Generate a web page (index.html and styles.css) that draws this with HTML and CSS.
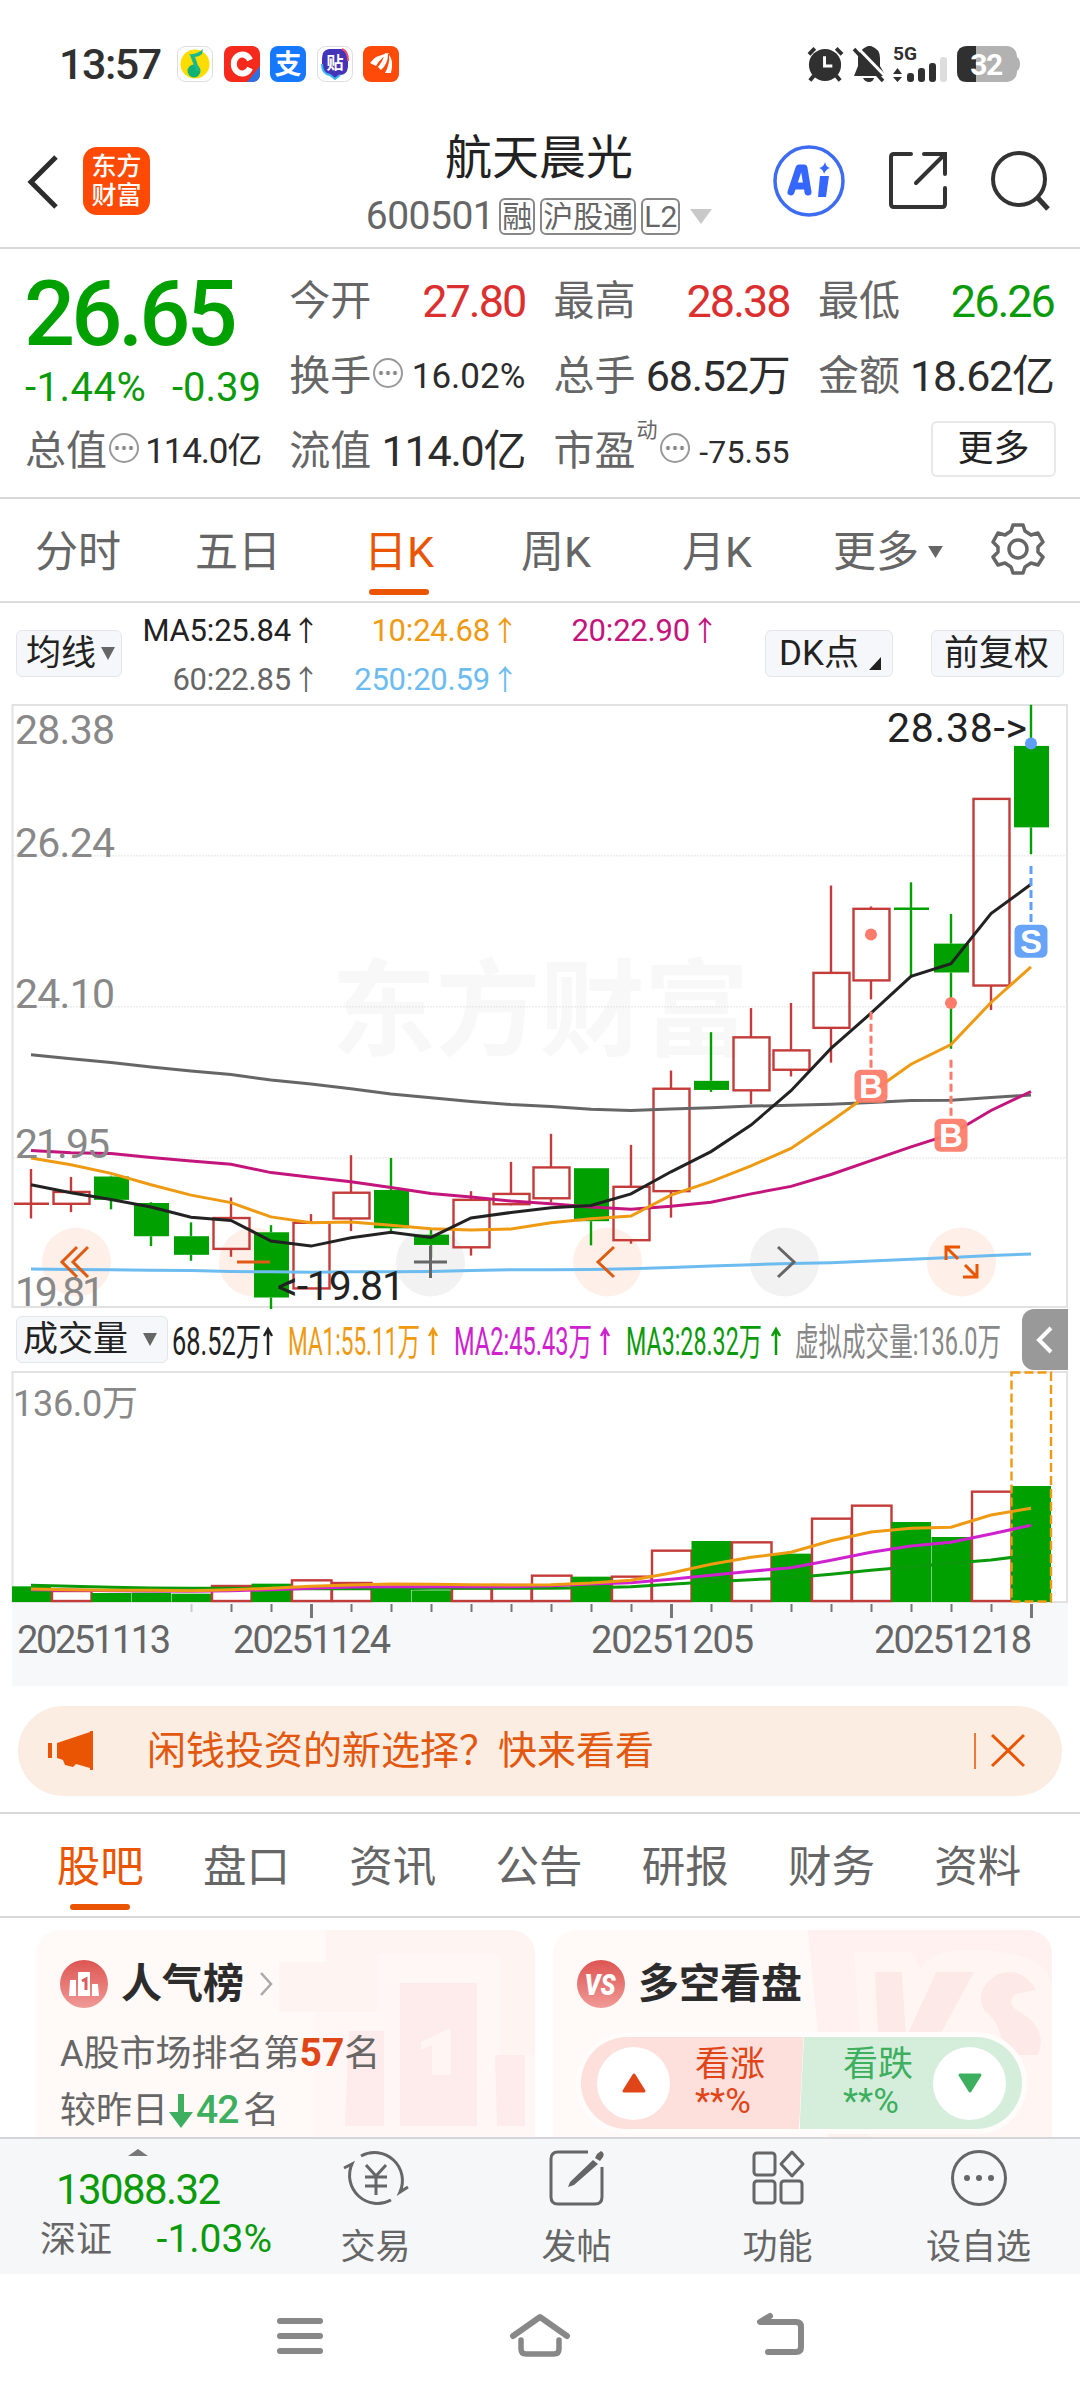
FILE: index.html
```html
<!DOCTYPE html>
<html lang="zh-CN">
<head>
    <meta charset="UTF-8">
    <meta name="viewport" content="width=device-width, initial-scale=1.0">
    <title>航天晨光 600501</title>
    <link rel="stylesheet" href="styles.css">
</head>
<body>
    <div class="status-bar">
        <span class="time">13:57</span>
        <div class="apps">
            <svg class="app" viewBox="0 0 36 36"><rect x=".5" y=".5" width="35" height="35" rx="8" fill="#fff" stroke="#ddd"/><circle cx="18" cy="18" r="14.5" fill="#fddc00"/><circle cx="17" cy="25" r="6.500" fill="#0fb174"/><path d="M12 8 Q20 9 26 3 L25 8 Q22 11 18 11 L23 25 H19 L13 9 Z" fill="#19b98c"/></svg>
            <svg class="app" viewBox="0 0 36 36"><rect width="36" height="36" rx="8" fill="#f52a1c"/><path d="M36 20 V28 Q36 36 28 36 H23 Z" fill="#2f6fe0"/><path d="M26 14 A8.500 9.500 0 1 0 26 22" fill="none" stroke="#fff" stroke-width="6"/></svg>
            <svg class="app" viewBox="0 0 36 36"><rect width="36" height="36" rx="8" fill="#1677ff"/><text x="18" y="28" class="app-text" font-size="27">支</text></svg>
            <svg class="app" viewBox="0 0 36 36"><rect x=".5" y=".5" width="35" height="35" rx="8" fill="#fff" stroke="#ddd"/><path d="M12 3 H25 Q31 4 31 12 V21 Q30 29 23 29 L18 33 L13 29 Q6 28 5 20 V12 Q5 4 12 3 Z" fill="#4634b8"/><path d="M5 18 Q5 28 13 29 L18 33 L23 29" fill="none" stroke="#36b6f5" stroke-width="2"/><path d="M25 3 Q31 5 31 15" fill="none" stroke="#ef4a6c" stroke-width="2"/><text x="18" y="23" class="app-text" font-size="17">贴</text></svg>
            <svg class="app" viewBox="0 0 36 36"><rect width="36" height="36" rx="8" fill="#ff4a0a"/><path d="M7 17 Q12 9 27 7 Q18 11 13 20 Z M15 21 Q20 15 22 7 L25 8 Q25 18 18 24 Z M22 27 Q27 18 26 9 Q31 14 28 27 Z" fill="#fff"/></svg>
        </div>
        <div class="sys">
            <svg width="37" height="36" viewBox="0 0 38 36"><circle cx="18.500" cy="19" r="16.500" fill="#303030"/><path d="M2 8 L8 2 M36 8 L30 2 M7 30 L3 35 M30 30 L34 35" stroke="#303030" stroke-width="4" fill="none"/><path d="M18 10 V20 H26" stroke="#fff" stroke-width="3" fill="none"/></svg>
            <svg width="31" height="36" viewBox="0 0 31 36"><path d="M15 0 H18 Q27 3 27 12 V20 L31 27 V30 H1 L5 20 V12 Q5 4 15 0 Z M10 32 H21 Q20 36 16 36 Q12 36 10 32 Z" fill="#303030"/><path d="M4 1 L33 31" stroke="#fff" stroke-width="3"/><path d="M1 3 L30 35" stroke="#303030" stroke-width="3.500"/></svg>
            <svg width="55" height="36" viewBox="0 0 55 36"><text x="0" y="14" class="net" textLength="24" lengthAdjust="spacingAndGlyphs">5G</text><path d="M0 28 L4.500 22 L9 28 Z M0 31 L4.500 36 L9 31 Z" fill="#303030"/><rect x="14" y="27" width="7" height="9" rx="3" fill="#303030"/><rect x="25" y="22" width="7" height="14" rx="3" fill="#303030"/><rect x="36" y="17" width="7" height="19" rx="3" fill="#303030"/><rect x="47" y="11" width="7" height="25" rx="3" fill="#ddd"/></svg>
            <svg width="63" height="36" viewBox="0 0 63 36"><rect width="60" height="36" rx="10" fill="#b2b2b2"/><path d="M10 0 H19 V36 H10 Q0 36 0 26 V10 Q0 0 10 0 Z" fill="#303030"/><path d="M60 11 Q63 13 63 18 Q63 23 60 25 Z" fill="#b2b2b2"/><text x="29" y="28.500" class="bat">32</text></svg>
        </div>
    </div>

    <header class="header">
        <svg class="back" width="32" height="54" viewBox="0 0 32 54"><path d="M29 2 L4 27 L29 52" fill="none" stroke="#2c2c2c" stroke-width="5"/></svg>
        <div class="logo"><span>东方</span><span>财富</span></div>
        <div class="stock">
            <h1>航天晨光</h1>
            <div class="code">600501<span class="tag">融</span><span class="tag">沪股通</span><span class="tag">L2</span><svg width="22" height="15" viewBox="0 0 22 15"><path d="M0 0 H22 L11 15 Z" fill="#c9c9c9"/></svg></div>
        </div>
        <div class="head-icons">
            <svg width="72" height="72" viewBox="0 0 72 72"><circle cx="36" cy="36" r="34" fill="none" stroke="#3d6cf3" stroke-width="3.500"/><path d="M18 47 L26 23 H31 L35 47 M22 41 H34" fill="none" stroke="#3567ff" stroke-width="7" stroke-linecap="round" stroke-linejoin="round"/><path d="M47 31 H56 L53 52 H45 Z" fill="#3567ff"/><path d="M52 17 Q53 22 57 23 Q53 24 51 29 Q50 24 46 23 Q51 22 52 17 Z" fill="#3567ff"/></svg>
            <svg width="60" height="60" viewBox="0 0 60 60"><path d="M23 3 H6 Q3 3 3 6 V53 Q3 56 6 56 H54 Q57 56 57 53 V37 M36 3 H57 V23 M57 3 L28 32" fill="none" stroke="#333" stroke-width="4" stroke-linecap="round"/></svg>
            <svg width="60" height="60" viewBox="0 0 60 60"><circle cx="28" cy="28" r="26" fill="none" stroke="#333" stroke-width="4"/><path d="M46 46 L57 58" stroke="#333" stroke-width="5"/></svg>
        </div>
    </header>

    <section class="quote">
        <div class="price-box">
            <div class="price">26.65</div>
            <div class="change"><span>-1.44%</span><span>-0.39</span></div>
        </div>
        <div class="cell"><label>今开</label><b class="red">27.80</b></div>
        <div class="cell"><label>最高</label><b class="red">28.38</b></div>
        <div class="cell"><label>最低</label><b class="green">26.26</b></div>
        <div class="cell"><label>换手</label><i class="info"></i><b class="s35">16.02%</b></div>
        <div class="cell"><label>总手</label><b class="s43">68.52万</b></div>
        <div class="cell"><label>金额</label><b class="s43">18.62亿</b></div>
        <div class="cell"><label>总值</label><i class="info"></i><b class="s35 tight">114.0亿</b></div>
        <div class="cell"><label>流值</label><b class="s43">114.0亿</b></div>
        <div class="cell"><label>市盈<sup>动</sup></label><i class="info"></i><b class="s32">-75.55</b></div>
        <div class="cell end"><button class="more">更多</button></div>
    </section>

    <nav class="period">
        <a><span>分时</span></a><a><span>五日</span></a><a><span class="on">日K</span></a><a><span>周K</span></a><a><span>月K</span></a>
        <a><span>更多</span><svg width="15" height="13" viewBox="0 0 16 14"><path d="M0 0 H16 L8 13 Z" fill="#666"/></svg></a>
        <svg class="gear" width="52" height="52" viewBox="0 0 52 52"><path d="M21 2 H31 L33 8 L39 12 L46 10 L51 19 L46 24 V29 L51 34 L46 42 L39 40 L33 44 L31 50 H21 L19 44 L13 40 L6 42 L1 34 L6 29 V24 L1 19 L6 10 L13 12 L19 8 Z" fill="none" stroke="#666" stroke-width="3.500" stroke-linejoin="round"/><circle cx="26" cy="26" r="9" fill="none" stroke="#666" stroke-width="3.500"/></svg>
    </nav>

    <div class="ma-bar">
        <button class="chip">均线<svg width="14" height="13" viewBox="0 0 14 13"><path d="M0 0 H14 L7 13 Z" fill="#666"/></svg></button>
        <div class="ma-grid">
            <span class="c-black">MA5:25.84<u>↑</u></span><span class="c-orange">10:24.68<u>↑</u></span><span class="c-pink">20:22.90<u>↑</u></span>
            <span class="c-gray">60:22.85<u>↑</u></span><span class="c-blue">250:20.59<u>↑</u></span>
        </div>
        <button class="chip dk">DK点<svg width="12" height="13" viewBox="0 0 12 13"><path d="M12 0 V13 H0 Z" fill="#222"/></svg></button>
        <button class="chip fq">前复权</button>
    </div>

    <svg class="kline" id="kline" width="1080" height="603" viewBox="0 0 1080 603"></svg>

    <div class="vol-bar">
        <button class="chip">成交量<svg width="14" height="13" viewBox="0 0 14 13"><path d="M0 0 H14 L7 13 Z" fill="#666"/></svg></button>
        <svg class="vol-text" width="840" height="66" viewBox="0 0 840 66">
            <g font-size="38">
                <text x="2" y="48" textLength="89" lengthAdjust="spacingAndGlyphs" fill="#222">68.52万</text>
                <text x="118" y="48" textLength="132" lengthAdjust="spacingAndGlyphs" fill="#ef9a13">MA1:55.11万</text>
                <text x="284" y="48" textLength="138" lengthAdjust="spacingAndGlyphs" fill="#cf22cf">MA2:45.43万</text>
                <text x="456" y="48" textLength="136" lengthAdjust="spacingAndGlyphs" fill="#0a9a0a">MA3:28.32万</text>
                <text x="625" y="48" textLength="206" lengthAdjust="spacingAndGlyphs" fill="#888">虚拟成交量:136.0万</text>
            </g>
            <g fill="none" stroke-width="2.500">
                <path d="M98 48 V23 M94 29 L98 22 L102 29" stroke="#222"/>
                <path d="M263 48 V23 M259 29 L263 22 L267 29" stroke="#ef9a13"/>
                <path d="M435 48 V23 M431 29 L435 22 L439 29" stroke="#cf22cf"/>
                <path d="M606 48 V23 M602 29 L606 22 L610 29" stroke="#0a9a0a"/>
            </g>
        </svg>
        <div class="fold"><svg width="18" height="28" viewBox="0 0 18 28"><path d="M15 2 L3 14 L15 26" fill="none" stroke="#fff" stroke-width="4"/></svg></div>
    </div>

    <svg class="volume" id="volume" width="1080" height="316" viewBox="0 0 1080 316"></svg>

    <div class="notice">
        <svg width="46" height="40" viewBox="0 0 46 40"><path d="M0 12 H4 V27 H0 Z M9 12 L42 1 V0 H45 V39 H42 V37 L28 33 L25 36 L17 34 L15 29 L9 27 Z" fill="#ea5504"/></svg>
        <span>闲钱投资的新选择？快来看看</span>
        <svg class="close" width="52" height="36" viewBox="0 0 52 36"><path d="M1 0 V36" stroke="#ea5504" stroke-width="1.500"/><path d="M18 2 L50 33 M50 2 L18 33" stroke="#ea5504" stroke-width="3"/></svg>
    </div>

    <nav class="tabs">
        <a class="on">股吧</a><a>盘口</a><a>资讯</a><a>公告</a><a>研报</a><a>财务</a><a>资料</a>
    </nav>

    <div class="cards">
        <div class="card">
            <svg class="card-bg" width="270" height="208" viewBox="0 0 270 208"><path d="M61 0 H270 V208 H61 V82 H14 V32 H61 Z" fill="#fef4f2"/><path d="M112 24 H235 V125 H270 V208 H49 V82 H112 Z" fill="#fff7f5"/><path d="M135 53 H212 V196 H135 Z M84 101 H119 V196 H80 Z M230 125 H260 V196 H232 Z" fill="#fdeceb"/><path d="M156 112 L186 98 V145 H167 V115 L156 120 Z" fill="#fff6f4"/></svg>
            <h2><svg width="48" height="48" viewBox="0 0 48 48"><use href="#disc"/><path d="M10 20 H16 V36 H9 Z M18 12 H30 V36 H18 Z M32 24 H38 L39 36 H32 Z" fill="#fff"/><path d="M22 21 L26 19 V30" fill="none" stroke="#de5c5c" stroke-width="3"/></svg>人气榜<svg class="arrow" width="14" height="24" viewBox="0 0 14 24"><path d="M2 1 L12 12 L2 23" fill="none" stroke="#aaa" stroke-width="2.500"/></svg></h2>
            <p>A股市场排名第<em>57</em>名</p>
            <p>较昨日<svg class="down" width="24" height="34" viewBox="0 0 24 34"><path d="M9 0 H15 V18 H24 L12 34 L0 18 H9 Z" fill="#3daf5f"/></svg><strong>42</strong>名</p>
        </div>
        <div class="card vs">
            <svg class="card-bg" width="244" height="208" viewBox="0 0 244 208"><path d="M0 0 H244 V208 H20 Z" fill="#fef1ef"/><path d="M46 22 H104 L112 40 Q120 20 160 20 Q244 20 244 60 V208 H60 Z" fill="#fff6f4"/><path d="M67 42 H94 L98 108 L128 42 H166 L108 150 H72 Z M228 60 Q215 36 190 44 Q165 60 176 80 Q200 100 190 125 H230 Q240 100 215 84 Q196 74 208 64 Z" fill="#fdeae8"/></svg>
            <h2><svg width="48" height="48" viewBox="0 0 48 48"><use href="#disc"/><text x="23" y="35" class="vs-text" textLength="31" lengthAdjust="spacingAndGlyphs">VS</text></svg>多空看盘</h2>
            <div class="pill">
                <div class="rise"><i class="ball"><svg width="24" height="20" viewBox="0 0 24 20"><path d="M12 2 L22 18 H2 Z" fill="#e04518" stroke="#e04518" stroke-width="3" stroke-linejoin="round"/></svg></i><span>看涨<br>**%</span></div>
                <div class="fall"><span>看跌<br>**%</span><i class="ball"><svg width="24" height="20" viewBox="0 0 24 20"><path d="M12 18 L22 2 H2 Z" fill="#3daf5f" stroke="#3daf5f" stroke-width="3" stroke-linejoin="round"/></svg></i></div>
            </div>
        </div>
    </div>

    <footer class="toolbar">
        <div class="index">
            <svg class="up" width="20" height="7" viewBox="0 0 20 7"><path d="M0 7 L10 0 L20 7 Z" fill="#777"/></svg>
            <div class="index-val">13088.32</div>
            <div class="index-row"><span>深证</span><b>-1.03%</b></div>
        </div>
        <a><svg width="66" height="60" viewBox="0 0 66 60"><path d="M18 8 A28 28 0 0 1 57 44 L65 39 M48 52 A28 28 0 0 1 9 16 L1 20" fill="none" stroke="#666" stroke-width="3"/><path d="M23 17 L33 28 L43 17 M33 28 V47 M22 29 H44 M22 38 H44" fill="none" stroke="#666" stroke-width="3"/></svg>交易</a>
        <a><svg width="58" height="60" viewBox="0 0 58 60"><path d="M40 4 H10 Q3 4 3 11 V49 Q3 56 10 56 H47 Q54 56 54 49 V19" fill="none" stroke="#666" stroke-width="3"/><path d="M49 6 L53 3 Q57 5 55 9 L52 13 L47 10 Z M45 12 L50 16 L26 37 L20 39 L22 34 Z" fill="#666"/></svg>发帖</a>
        <a><svg width="54" height="60" viewBox="0 0 54 60"><g fill="none" stroke="#666" stroke-width="3"><rect x="3" y="5" width="21" height="22" rx="3"/><rect x="3" y="33" width="21" height="22" rx="3"/><rect x="30" y="33" width="21" height="22" rx="3"/><path d="M41 4 L52 16 L41 28 L30 16 Z" stroke-linejoin="round"/></g></svg>功能</a>
        <a><svg width="58" height="60" viewBox="0 0 58 60"><circle cx="29" cy="30" r="26.500" fill="none" stroke="#666" stroke-width="3"/><g fill="#666"><circle cx="17" cy="30" r="3"/><circle cx="29" cy="30" r="3"/><circle cx="41" cy="30" r="3"/></g></svg>设自选</a>
    </footer>

    <div class="sys-nav">
        <svg width="46" height="40" viewBox="0 0 46 40"><path d="M3 5 H43 M3 20 H43 M3 35 H43" stroke="#888" stroke-width="6" stroke-linecap="round"/></svg>
        <svg width="60" height="46" viewBox="0 0 60 46"><path d="M3 23 L30 4 L57 23" fill="none" stroke="#888" stroke-width="6" stroke-linejoin="round" stroke-linecap="round"/><path d="M11 27 V36 Q11 41 16 41 H44 Q49 41 49 36 V27" fill="none" stroke="#888" stroke-width="5.500" stroke-linecap="round"/></svg>
        <svg width="50" height="44" viewBox="0 0 50 44"><path d="M14 2 L4 8 H40 Q45 8 45 13 V33 Q45 38 40 38 H12" fill="none" stroke="#888" stroke-width="6" stroke-linejoin="round" stroke-linecap="round"/></svg>
    </div>

    <svg width="0" height="0" class="defs"><defs><linearGradient id="disc-fill" x2="0" y2="1"><stop offset="0" stop-color="#dd5552"/><stop offset="1" stop-color="#f09a96"/></linearGradient><circle id="disc" cx="24" cy="24" r="24" fill="url(#disc-fill)"/></defs></svg>

    <script src="script.js"></script>
</body>
</html>
```

FILE: styles.css
```css
* {
    box-sizing: border-box;
}

body {
    margin: 0;
    width: 1080px;
    height: 2400px;
    overflow: hidden;
    background: #fff;
    color: #666;
    font-family: Roboto, 'Noto Sans CJK SC', sans-serif;
    line-height: 1;
    display: flex;
    flex-direction: column;
}

body > * {
    flex: none;
}

svg {
    display: block;
    flex: none;
    overflow: visible;
}

h1, h2, p {
    margin: 0;
    font-weight: 400;
}

button {
    font-family: inherit;
    line-height: 1;
    padding: 0;
    background: #f6f7fa;
    border: 1px solid #e4e6e9;
    border-radius: 6px;
    color: #222;
    display: flex;
    align-items: center;
}

.red { color: #dc2f2f; }
.green { color: #0a9a0a; }
.c-black { color: #222; }
.c-orange { color: #ef9a13; }
.c-pink { color: #c4157c; }
.c-gray { color: #666; }
.c-blue { color: #6cbcf0; }

/* status bar */
.status-bar {
    height: 110px;
    padding: 18px 60px 0 59px;
    display: flex;
    align-items: center;
}
.time {
    font-size: 43px;
    font-weight: 500;
    color: #303030;
    width: 118px;
    letter-spacing: -1.5px;
}
.apps {
    display: flex;
    gap: 10.5px;
}
.app {
    width: 36px;
    height: 36px;
}
.app-text {
    fill: #fff;
    font-weight: 700;
    text-anchor: middle;
}
.sys {
    margin-left: auto;
    display: flex;
    gap: 9px;
}
.net {
    font-size: 18px;
    font-weight: 700;
    fill: #303030;
}
.bat {
    font-size: 30px;
    font-weight: 700;
    fill: #fff;
    text-anchor: middle;
    letter-spacing: -1.5px;
}

/* header */
.header {
    height: 139px;
    border-bottom: 2px solid #d8d8d8;
    display: flex;
    padding-left: 27px;
    position: relative;
}
.back {
    margin: 45px 24px 0 0;
}
.logo {
    width: 67px;
    height: 68px;
    margin-top: 37px;
    border-radius: 14px;
    background: #ff4a05;
    color: #fff;
    font-size: 25px;
    font-weight: 500;
    display: flex;
    flex-direction: column;
    align-items: center;
    justify-content: center;
    gap: 4px;
}
.stock {
    width: 380px;
    margin-left: 199px;
    padding-top: 24px;
    text-align: center;
}
.stock h1 {
    font-size: 47px;
    color: #222;
}
.code {
    margin-top: 16px;
    display: flex;
    align-items: center;
    justify-content: center;
    font-size: 39px;
    letter-spacing: -.5px;
    gap: 5px;
}
.tag {
    height: 37px;
    border: 2px solid #888;
    border-radius: 6px;
    font-size: 30px;
    padding: 2px 1px 0;
    line-height: 30px;
    letter-spacing: 0;
}
.code svg {
    margin-left: 5px;
}
.head-icons {
    position: absolute;
    right: 29px;
    top: 35px;
    display: flex;
    align-items: center;
    gap: 43px;
}

/* quote */
.quote {
    height: 250px;
    border-bottom: 2px solid #d8d8d8;
    padding: 15px 25px 0 25px;
    display: grid;
    grid-template-columns: repeat(4, 236px);
    grid-template-rows: repeat(3, 75px);
    column-gap: 28.3px;
}
.price-box {
    grid-row: span 2;
    color: #00a000;
    padding-top: 6px;
}
.price {
    font-size: 90px;
    font-weight: 500;
    letter-spacing: -4px;
    margin-left: -1px;
}
.change {
    display: flex;
    justify-content: space-between;
    font-size: 40px;
    margin-top: 8px;
    color: #0a9a0a;
}
.change span:first-child {
    letter-spacing: .5px;
}
.cell {
    display: flex;
    align-items: center;
    font-size: 45px;
    white-space: nowrap;
}
.cell label {
    font-size: 41px;
    position: relative;
}
.cell sup {
    position: absolute;
    font-size: 21px;
    top: -11px;
    left: 83px;
}
.cell b {
    margin-left: auto;
    font-weight: 400;
    letter-spacing: -2px;
}
.cell b:not(.red):not(.green) {
    color: #2c2c2c;
}
.cell .s43 { font-size: 43px; letter-spacing: -1.2px; }
.cell .s35 { font-size: 35px; letter-spacing: 0; }
.cell .tight { letter-spacing: -1.2px; }
.cell .s32 { font-size: 32px; letter-spacing: .2px; }
.info {
    width: 30px;
    height: 30px;
    border: 2px solid #999;
    border-radius: 50%;
    margin: -8px 0 0 2px;
    background: radial-gradient(circle, #888 1.8px, transparent 2.2px) center / 7px 26px repeat-x;
    background-clip: content-box;
    padding: 0 2px;
}
label:has(sup) + .info {
    margin-left: 24px;
}
.end {
    justify-content: flex-end;
}
.more {
    width: 125px;
    height: 56px;
    background: #fff;
    border: 2px solid #e8e8e8;
    font-size: 36px;
    justify-content: center;
    margin: -5px -2px 0 0;
}

/* tabs over the chart */
.period {
    height: 104px;
    border-bottom: 2px solid #dcdcdc;
    display: grid;
    grid-template-columns: 160px 169px 157px 161px 151px 159px 52px;
    align-items: center;
    font-size: 43px;
    padding: 4px 0 0 35px;
}
.period a {
    display: flex;
    align-items: center;
}
.period span {
    height: 98px;
    line-height: 98px;
    position: relative;
}
.period a svg {
    margin-left: 9px;
}
.on {
    color: #ea5504;
}
.on::after {
    content: '';
    position: absolute;
    left: 50%;
    margin-left: -30px;
    bottom: 6px;
    width: 60px;
    height: 6px;
    border-radius: 3px;
    background: #ea5504;
}
.period .gear {
    margin-top: -6px;
}

.ma-bar {
    height: 101px;
    padding: 0 16px;
    display: flex;
    align-items: flex-start;
}
.chip {
    height: 47px;
    padding: 0 6px 0 9px;
    font-size: 35px;
    margin-top: 27px;
}
.ma-bar .chip svg {
    margin-left: 5px;
}
.ma-grid {
    margin: 3px 0 0 18px;
    display: grid;
    grid-template-columns: 176px 199px 200px;
    grid-template-rows: 49px 49px;
    font-size: 31px;
    align-items: center;
    text-align: right;
    letter-spacing: -.2px;
    white-space: nowrap;
}
.ma-grid u {
    text-decoration: none;
    font-family: 'Noto Sans CJK SC';
    display: inline-block;
    width: 20px;
    margin-left: 5px;
    font-size: 28px;
    text-indent: -4px;
}
.ma-bar .dk {
    margin-left: 50px;
    width: 128px;
    padding-left: 13px;
}
.ma-bar .dk svg {
    margin: 20px 0 0 10px;
}
.ma-bar .fq {
    margin-left: auto;
    width: 133px;
    padding-left: 12px;
}

/* charts */
.kline text, .volume text {
    font-size: 41px;
    fill: #888;
}
.kline .mark {
    fill: #222;
}
.kline .watermark {
    font-size: 105px;
    font-weight: 700;
    fill: #f8f8f8;
}
.kline .sign {
    font-family: 'Liberation Sans';
    font-size: 33px;
    font-weight: 700;
    fill: #fff;
    text-anchor: middle;
}
.volume .date {
    font-size: 38px;
    fill: #666;
}

.vol-bar {
    height: 63px;
    padding-left: 16px;
    display: flex;
}
.vol-bar .chip {
    width: 152px;
    margin-top: 9px;
    padding-left: 6px;
    gap: 15px;
    flex: none;
}
.vol-text {
    margin-left: 2px;
}
.fold {
    width: 46px;
    height: 61px;
    margin: 2px 12px 0 auto;
    border-radius: 12px 0 0 12px;
    background: #999;
    display: flex;
    align-items: center;
    justify-content: center;
}

.notice {
    margin: 20px 18px 0;
    height: 90px;
    border-radius: 45px;
    background: #fcede3;
    color: #e2580f;
    font-size: 39px;
    display: flex;
    align-items: center;
    padding: 0 36px 0 30px;
}
.notice span {
    margin-left: 53px;
}
.notice .close {
    margin-left: auto;
}

.tabs {
    margin-top: 16px;
    height: 106px;
    border-top: 2px solid #d8d8d8;
    border-bottom: 2px solid #d8d8d8;
    display: flex;
    padding: 0 29px 0 27px;
    font-size: 43.5px;
}
.tabs a {
    flex: 1;
    height: 102px;
    line-height: 107px;
    text-align: center;
    position: relative;
}

.cards {
    height: 219px;
    padding: 12px 28px 0 36px;
    display: flex;
    gap: 18px;
}
.card {
    width: 499px;
    height: 207px;
    background: #fff9f7;
    border-radius: 24px 24px 0 0;
    padding: 30px 24px 0 24px;
    position: relative;
    overflow: hidden;
}
.card-bg {
    position: absolute;
    right: 0;
    top: 0;
}
.card h2 {
    display: flex;
    align-items: center;
    font-size: 41px;
    font-weight: 700;
    color: #2c2c2c;
    gap: 13px;
    position: relative;
}
.arrow {
    margin-left: 2px;
}
.card p {
    display: flex;
    align-items: center;
    height: 57px;
    font-size: 36px;
    position: relative;
}
.card h2 + p {
    margin-top: 17px;
}
.card em {
    font-style: normal;
    font-size: 39px;
    font-weight: 700;
    color: #e04518;
}
.card strong {
    font-size: 39px;
    font-weight: 500;
    color: #3daf5f;
    margin: 0 5px 0 3px;
    letter-spacing: -1px;
}
.down {
    margin-left: 1px;
}
.vs-text {
    font-size: 30px;
    font-weight: 900;
    font-style: italic;
    fill: #fff;
    text-anchor: middle;
}
.pill {
    position: relative;
    margin: 24px 0 0 -1px;
    width: 451px;
    height: 102px;
    border: 5px solid #fffcfb;
    border-radius: 51px;
    background: #fff;
    display: flex;
    justify-content: space-between;
    overflow: hidden;
}
.rise, .fall {
    width: 223px;
    display: flex;
    align-items: center;
    gap: 25px;
    font-size: 35px;
    line-height: 37px;
    padding: 0 16px;
}
.rise {
    background: #fddfdb;
    color: #e04518;
    clip-path: polygon(0 0, 100% 0, 98% 100%, 0 100%);
}
.fall {
    background: #d5eedc;
    color: #3daf5f;
    justify-content: flex-end;
    margin-left: -4px;
    gap: 20px;
    clip-path: polygon(2% 0, 100% 0, 100% 100%, 0 100%);
}
.ball {
    width: 73px;
    height: 73px;
    border-radius: 50%;
    background: #fff;
    display: flex;
    align-items: center;
    justify-content: center;
}

.toolbar {
    height: 137px;
    border-top: 2px solid #d3d5d8;
    background: #f6f7f9;
    display: flex;
}
.toolbar a {
    width: 201px;
    display: flex;
    flex-direction: column;
    align-items: center;
    font-size: 35px;
    padding-top: 9px;
    gap: 22px;
}
.index {
    width: 275px;
    padding-top: 10px;
}
.up {
    margin-left: 128px;
}
.index-val {
    margin: 13px 0 0 56px;
    font-size: 42px;
    letter-spacing: -1.6px;
    color: #0a9a0a;
}
.index-row {
    display: flex;
    justify-content: space-between;
    align-items: center;
    margin: 9px 3px 0 40px;
    font-size: 36px;
}
.index-row b {
    font-size: 39px;
    font-weight: 400;
    color: #0a9a0a;
}

.sys-nav {
    height: 125px;
    display: flex;
    align-items: center;
    justify-content: space-between;
    padding: 0 274px 2px 277px;
}
.defs {
    position: absolute;
}
```

FILE: script.js
```js
const NS = 'http://www.w3.org/2000/svg';
const RED = '#c43c3a';
const GREEN = '#00a000';
const x = i => 31 + 40 * i;

function add(parent, tag, attrs, text) {
    const el = document.createElementNS(NS, tag);
    for (const k in attrs) el.setAttribute(k, attrs[k]);
    if (text) el.textContent = text;
    parent.appendChild(el);
    return el;
}

function line(parent, data, y, color, width) {
    add(parent, 'polyline', {
        points: data.map((v, i) => x(i) + ',' + y(v).toFixed(1)).join(' '),
        fill: 'none', stroke: color, 'stroke-width': width
    });
}

// [up, high, low, body top, body bottom]
const candles = [
    [1, 1186, 1311, 1274, 1274], [1, 1206, 1295, 1244, 1274], [0, 1203, 1288, 1205, 1264],
    [0, 1270, 1381, 1272, 1356], [0, 1321, 1418, 1356, 1403], [1, 1258, 1408, 1310, 1388],
    [0, 1328, 1540, 1346, 1511], [1, 1300, 1488, 1322, 1488], [1, 1151, 1343, 1246, 1311],
    [0, 1158, 1347, 1239, 1336], [0, 1336, 1410, 1352, 1378], [1, 1242, 1405, 1264, 1384],
    [1, 1168, 1278, 1249, 1275], [1, 1097, 1270, 1182, 1260], [0, 1184, 1379, 1184, 1318],
    [1, 1125, 1375, 1231, 1366], [1, 937, 1309, 983, 1242], [0, 840, 991, 963, 986],
    [1, 779, 1022, 853, 987], [1, 766, 952, 886, 935], [1, 469, 917, 690, 829],
    [1, 522, 757, 528, 709], [0, 461, 703, 528, 528], [0, 541, 882, 616, 689],
    [1, 250, 784, 250, 722], [0, 12, 390, 116, 322]
];
const ma5 = [1226, 1246, 1263, 1282, 1308, 1316, 1368, 1381, 1360, 1346, 1359, 1310, 1296, 1284, 1278, 1249, 1193, 1142, 1075, 988, 881, 792, 699, 667, 540, 466];
const ma10 = [1158, 1175, 1197, 1226, 1252, 1271, 1307, 1322, 1320, 1328, 1337, 1340, 1338, 1322, 1312, 1305, 1252, 1218, 1178, 1134, 1065, 993, 921, 871, 765, 675];
const ma20 = [1139, 1145, 1147, 1157, 1166, 1174, 1195, 1207, 1218, 1233, 1248, 1257, 1267, 1274, 1282, 1288, 1280, 1270, 1249, 1230, 1200, 1165, 1130, 1098, 1038, 990];
const ma60 = [897, 907, 917, 928, 938, 947, 961, 971, 983, 996, 1006, 1015, 1023, 1028, 1035, 1038, 1034, 1031, 1027, 1025, 1022, 1018, 1013, 1012, 1005, 999];
const ma250 = [1439, 1440, 1441, 1442, 1443, 1445, 1446, 1447, 1446, 1446, 1445, 1443, 1441, 1441, 1440, 1438, 1435, 1431, 1428, 1425, 1423, 1419, 1414, 1410, 1405, 1401];

function drawKline() {
    const svg = document.getElementById('kline');
    const y = v => (v - 10) / 2.529;

    add(svg, 'text', { x: 331, y: 343, class: 'watermark', textLength: 418 }, '东方财富');
    add(svg, 'rect', { x: 12.5, y: 1, width: 1054.5, height: 602, fill: 'none', stroke: '#e2e2e2', 'stroke-width': 2 });
    [394, 776, 1158].forEach(v => add(svg, 'line', { x1: 13, x2: 1067, y1: y(v), y2: y(v), stroke: '#e4e4e4', 'stroke-dasharray': '2 1' }));

    // round buttons under the candles
    const round = ['#fef0e8', '#fef0e8', '#f2f2f2', '#fef0e8', '#f2f2f2', '#fef0e8'];
    round.forEach((c, i) => add(svg, 'circle', { cx: 76.5 + 177 * i, cy: 558, r: 34.5, fill: c }));

    candles.forEach(([up, hi, lo, top, bottom], i) => {
        const color = up ? RED : GREEN;
        if (hi < top) add(svg, 'line', { x1: x(i), x2: x(i), y1: y(hi), y2: y(top), stroke: color, 'stroke-width': 2.4 });
        if (lo > bottom) add(svg, 'line', { x1: x(i), x2: x(i), y1: y(bottom), y2: y(lo), stroke: color, 'stroke-width': 2.4 });
        if (top === bottom) {
            add(svg, 'line', { x1: x(i) - 17, x2: x(i) + 18, y1: y(top), y2: y(top), stroke: color, 'stroke-width': 2.4 });
        } else if (up) {
            add(svg, 'rect', { x: x(i) - 17.5, y: y(top), width: 36, height: y(bottom) - y(top), fill: 'none', stroke: color, 'stroke-width': 2.4 });
        } else {
            add(svg, 'rect', { x: x(i) - 17, y: y(top), width: 35, height: y(bottom) - y(top), fill: color });
        }
    });

    line(svg, ma250, y, '#6cbcf0', 3);
    line(svg, ma60, y, '#666', 3);
    line(svg, ma20, y, '#c4157c', 3);
    line(svg, ma10, y, '#ef9a13', 3);
    line(svg, ma5, y, '#222', 3);

    [[21, 593, 788, 935, 'B', '#fd7c6b'], [23, 766, 910, 1059, 'B', '#fd7c6b'], [25, 110, 420, 568, 'S', '#5f9ff8']].forEach(([i, dot, dash, box, name, color]) => {
        add(svg, 'circle', { cx: x(i), cy: y(dot), r: 6, fill: color });
        add(svg, 'line', { x1: x(i), x2: x(i), y1: y(dash), y2: y(box) - 2, stroke: color, 'stroke-width': 3, 'stroke-dasharray': '8 4' });
        add(svg, 'rect', { x: x(i) - 16.5, y: y(box), width: 33, height: 33, rx: 6, fill: color, 'fill-opacity': .95 });
        add(svg, 'text', { x: x(i), y: y(box) + 28, class: 'sign' }, name);
    });

    [['28.38', 40], ['26.24', 153], ['24.10', 304], ['21.95', 454], ['19.81', 602]].forEach(([t, ty]) =>
        add(svg, 'text', { x: 15, y: ty, textLength: t === '19.81' ? 90 : t === '21.95' ? 95 : 100 }, t));
    add(svg, 'text', { x: 887, y: 38, class: 'mark', textLength: 140 }, '28.38->');
    add(svg, 'text', { x: 277, y: 596, class: 'mark', textLength: 128 }, '<-19.81');

    const icons = [
        ['M77 543 L62 558 L77 573 M88 543 L73 558 L88 573', '#df5a12'],
        ['M237 558 H270', '#df5a12'],
        ['M414 558 H447 M430.500 542 V574', '#666'],
        ['M614 543 L598 558 L614 573', '#df5a12'],
        ['M778 543 L794 558 L778 573', '#666'],
        ['M946 556 V543 H960 M946 543 L958 555 M965 561 L977 573 M963 573 H977 V560', '#ea5504']
    ];
    icons.forEach(([d, c]) => add(svg, 'path', { d: d, fill: 'none', stroke: c, 'stroke-width': 3 }));
}

// [up, top]
const volumes = [
    [0, 860], [1, 874], [0, 880], [0, 879], [0, 882], [1, 859], [0, 852], [1, 842], [1, 850],
    [0, 866], [0, 872], [1, 866], [1, 856], [1, 828], [0, 831], [1, 831], [1, 753], [0, 724],
    [1, 728], [0, 762], [1, 657], [1, 618], [0, 667], [0, 712], [1, 576], [0, 559]
];
const vma1 = [868, 870, 872, 872, 873, 870, 866, 860, 856, 853, 854, 855, 856, 855, 850, 842, 820, 794, 773, 758, 723, 697, 686, 683, 646, 626];
const vma2 = [870, 871, 873, 874, 875, 873, 870, 866, 862, 861, 861, 861, 861, 858, 853, 849, 839, 827, 815, 804, 782, 758, 739, 728, 703, 677];
const vma3 = [857, 860, 863, 865, 866, 866, 867, 867, 867, 867, 866, 866, 866, 866, 864, 861, 854, 846, 840, 834, 824, 812, 801, 791, 781, 766];

function drawVolume() {
    const svg = document.getElementById('volume');
    const y = v => (v - 211) / 3;
    const base = y(904);

    add(svg, 'rect', { x: 12, y: 232, width: 1056, height: 84, fill: '#f7f8fa' });
    add(svg, 'rect', { x: 12.5, y: 2, width: 1054.5, height: 230, fill: 'none', stroke: '#e2e2e2', 'stroke-width': 2 });
    add(svg, 'text', { x: 13, y: 46, textLength: 125, style: 'font-size:36px' }, '136.0万');

    volumes.forEach(([up, top], i) => {
        const left = i ? x(i) - 19.5 : 12;
        const w = x(i) + 20 - left;
        if (up) add(svg, 'rect', { x: left + .5, y: y(top), width: w, height: base - y(top), fill: '#fff', stroke: RED, 'stroke-width': 2.4 });
        else add(svg, 'rect', { x: left, y: y(top), width: w, height: base - y(top) + 1, fill: GREEN });
    });
    add(svg, 'rect', { x: 1011.5, y: 2.5, width: 39.5, height: base - 2, fill: 'none', stroke: '#ef9a13', 'stroke-width': 2.4, 'stroke-dasharray': '9 4' });

    line(svg, vma3, y, '#0a9a0a', 3);
    line(svg, vma2, y, '#cf22cf', 3);
    line(svg, vma1, y, '#ef9a13', 3);

    for (let i = 4; i < 26; i++) {
        const major = i === 7 || i === 16 || i === 25;
        add(svg, 'line', { x1: x(i) + .5, x2: x(i) + .5, y1: 234, y2: major ? 248 : 242, stroke: i === 4 ? '#ccc' : '#777', 'stroke-width': major ? 3 : 2 });
    }
    [['20251113', 17, 154], ['20251124', 233, 158], ['20251205', 591, 163], ['20251218', 874, 158]].forEach(([t, tx, w]) =>
        add(svg, 'text', { x: tx, y: 283, class: 'date', textLength: w }, t));
}

drawKline();
drawVolume();
```
